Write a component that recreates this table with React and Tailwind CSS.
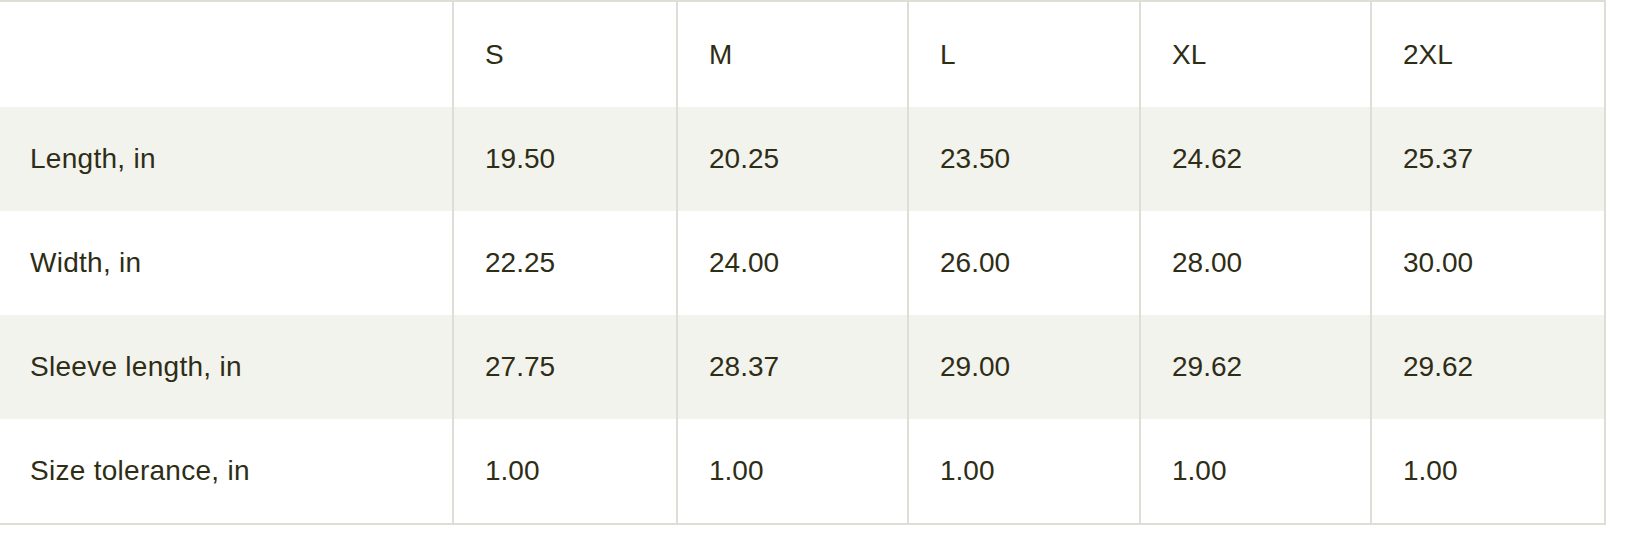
const sizes = ['S', 'M', 'L', 'XL', '2XL']

const rows = [
  { label: 'Length, in', values: ['19.50', '20.25', '23.50', '24.62', '25.37'] },
  { label: 'Width, in', values: ['22.25', '24.00', '26.00', '28.00', '30.00'] },
  { label: 'Sleeve length, in', values: ['27.75', '28.37', '29.00', '29.62', '29.62'] },
  { label: 'Size tolerance, in', values: ['1.00', '1.00', '1.00', '1.00', '1.00'] },
]

// widths read off the columns, first one has no left border
const colWidths = ['w-[452px]', 'w-[224px]', 'w-[231px]', 'w-[232px]', 'w-[231px]', 'w-[234px]']

const cellClasses = 'border-l-2 border-[#deded6] pl-[31px] text-left align-middle font-normal'

const SizeChart = () => {
  return (
    <table className="w-[1606px] table-fixed border-separate border-spacing-0 border-y-2 border-r-2 border-[#deded6] text-[28px] leading-none text-[#2e2d16]">
      <colgroup>
        {colWidths.map((w, i) => (
          <col key={i} className={w} />
        ))}
      </colgroup>
      <thead>
        <tr className="h-[105px] bg-white">
          <th className="pl-[30px]" />
          {sizes.map((size) => (
            <th key={size} className={cellClasses}>
              {size}
            </th>
          ))}
        </tr>
      </thead>
      <tbody>
        {rows.map((row, index) => (
          <tr key={row.label} className={`h-[104px] ${index % 2 === 0 ? 'bg-[#f3f3ee]' : 'bg-white'}`}>
            <td className="pl-[30px] align-middle tracking-[0.01em]">{row.label}</td>
            {row.values.map((value, i) => (
              <td key={i} className={cellClasses}>
                {value}
              </td>
            ))}
          </tr>
        ))}
      </tbody>
    </table>
  )
}

export default function App() {
  return (
    <div className="min-h-[542px] w-[1626px] bg-white" style={{ fontFamily: '"Liberation Sans", Arial, sans-serif' }}>
      <SizeChart />
    </div>
  )
}
